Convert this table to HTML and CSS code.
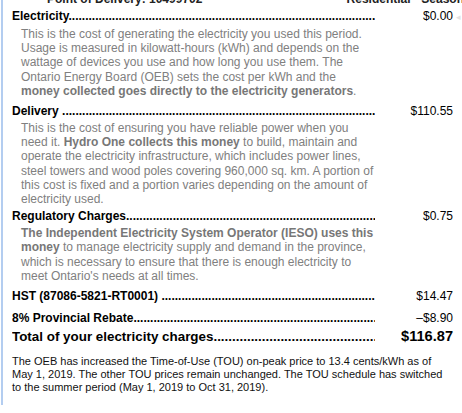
FILE: index.html
```html
<!DOCTYPE html>
<html>
<head>
<meta charset="utf-8">
<link rel="stylesheet" href="styles.css">
</head>
<body>
<div class="page">
  <div class="topline">
    <span class="pod">Point of Delivery: 10499702</span>
    <span class="rate">Residential - Seasonal</span>
  </div>

  <div class="item item-first">
    <div class="row">
      <div class="label"><span class="name">Electricity</span><span class="dots">................................................................................................................................................</span></div>
      <div class="amount">$0.00</div>
      <span class="marker">◂</span>
    </div>
    <p class="desc">This is the cost of generating the electricity you used this period. Usage is measured in kilowatt-hours (kWh) and depends on the wattage of devices you use and how long you use them. The Ontario Energy Board (OEB) sets the cost per kWh and the <b>money collected goes directly to the electricity generators</b>.</p>
  </div>

  <div class="item item-delivery">
    <div class="row">
      <div class="label"><span class="name">Delivery </span><span class="dots">................................................................................................................................................</span></div>
      <div class="amount">$110.55</div>
    </div>
    <p class="desc">This is the cost of ensuring you have reliable power when you need it. <b>Hydro One collects this money</b> to build, maintain and operate the electricity infrastructure, which includes power lines, steel towers and wood poles covering 960,000 sq. km. A portion of this cost is fixed and a portion varies depending on the amount of electricity used.</p>
  </div>

  <div class="item item-reg">
    <div class="row">
      <div class="label"><span class="name">Regulatory Charges</span><span class="dots">................................................................................................................................................</span></div>
      <div class="amount">$0.75</div>
    </div>
    <p class="desc"><b>The Independent Electricity System Operator (IESO) uses this money</b> to manage electricity supply and demand in the province, which is necessary to ensure that there is enough electricity to meet Ontario's needs at all times.</p>
  </div>

  <div class="item item-hst">
    <div class="row">
      <div class="label"><span class="name">HST (87086-5821-RT0001) </span><span class="dots">................................................................................................................................................</span></div>
      <div class="amount">$14.47</div>
    </div>
  </div>

  <div class="item item-rebate">
    <div class="row">
      <div class="label"><span class="name">8% Provincial Rebate</span><span class="dots">................................................................................................................................................</span></div>
      <div class="amount">–$8.90</div>
    </div>
  </div>

  <div class="item item-total">
    <div class="row total">
      <div class="label"><span class="name">Total of your electricity charges</span><span class="dots">................................................................................................................................................</span></div>
      <div class="amount">$116.87</div>
    </div>
  </div>

  <p class="note">The OEB has increased the Time-of-Use (TOU) on-peak price to 13.4 cents/kWh as of May 1, 2019. The other TOU prices remain unchanged. The TOU schedule has switched to the summer period (May 1, 2019 to Oct 31, 2019).</p>
</div>
</body>
</html>
```

FILE: styles.css
```css
html, body {
  margin: 0;
  padding: 0;
  background: #ffffff;
}

body {
  font-family: "Liberation Sans", Arial, sans-serif;
  font-size: 12px;
  color: #000;
  height: 413px;
  overflow: hidden;
}

.page {
  margin-left: 1px;
  border-left: 2px solid #b3cdf0;
  padding-left: 9px;
  width: 461px;
  min-height: 413px;
  box-sizing: border-box;
}

.topline {
  display: flex;
  height: 16px;
  line-height: 14px;
  margin-top: -8px;
  color: #222;
  font-weight: bold;
}

.pod {
  margin-left: 35px;
}

.rate {
  margin-left: auto;
  margin-right: -12px;
}

.row {
  display: flex;
  align-items: baseline;
  line-height: 16px;
}

.label {
  width: 363px;
  flex: none;
  white-space: nowrap;
  overflow: hidden;
  font-weight: bold;
}

.amount {
  width: 78px;
  flex: none;
  text-align: right;
}

.marker {
  color: #e2e2e2;
  font-size: 9px;
  margin-left: 3px;
}

.desc {
  margin: 2px 0 0 0;
  padding-left: 9px;
  width: 356px;
  line-height: 14.2px;
  color: #808080;
}

.desc b {
  color: #777;
}

.item-delivery { margin-top: 5px; }
.item-reg { margin-top: 2px; }
.item-hst { margin-top: 5px; }
.item-rebate { margin-top: 6px; }
.item-total { margin-top: 1px; }

.total {
  font-size: 13.4px;
  line-height: 18px;
}

.total .amount {
  font-weight: bold;
  font-size: 14.6px;
}

.note {
  margin: 9px 0 0 0;
  width: 438px;
  font-size: 11px;
  line-height: 13px;
  color: #111;
}
```
